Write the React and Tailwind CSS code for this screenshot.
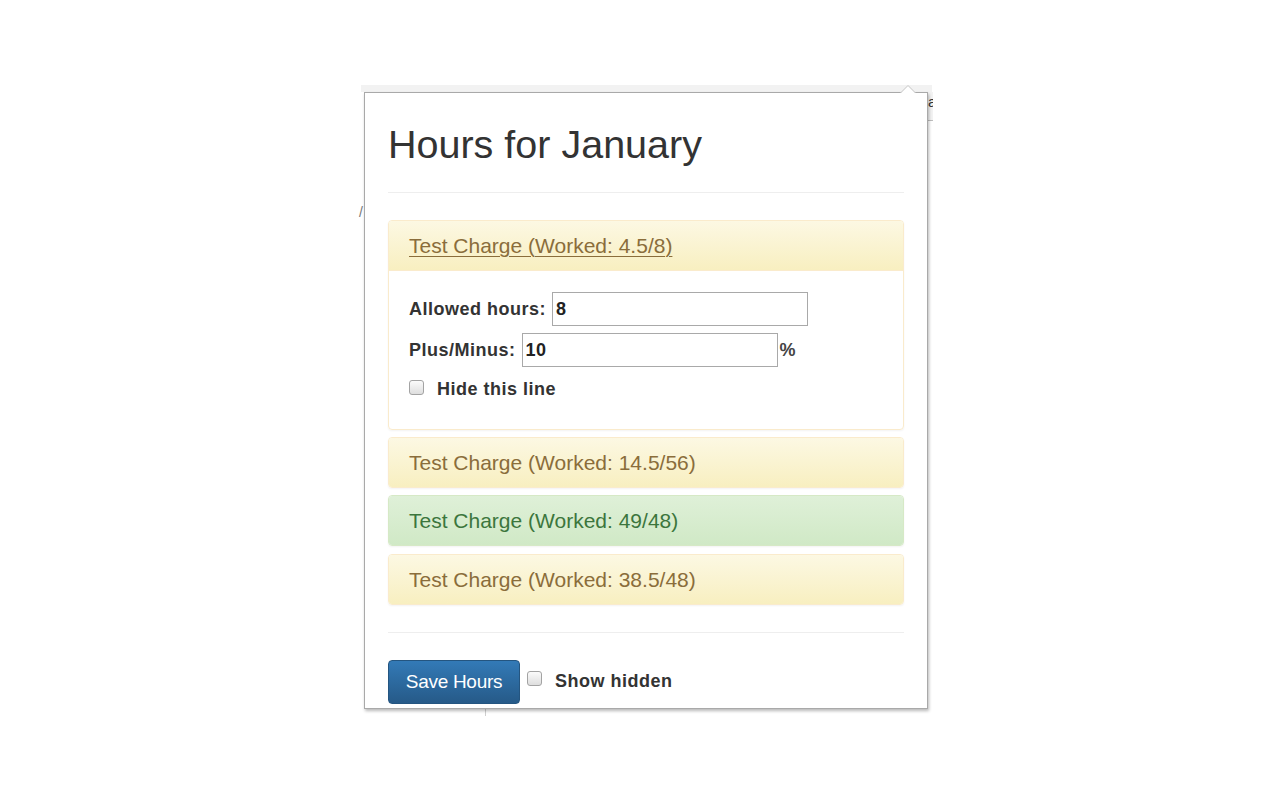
const font = { fontFamily: '"Liberation Sans", Arial, sans-serif' };

function Check({ className = "" }) {
  return (
    <span
      className={
        "block h-[15px] w-[15px] shrink-0 rounded-[3px] border border-[#a3a3a3] bg-gradient-to-b from-[#fbfbfb] to-[#dedede] " +
        className
      }
    />
  );
}

function Panel({ title, tone = "warning", children, link = false, className = "" }) {
  const warning = tone === "warning";
  return (
    <div
      className={
        "overflow-hidden rounded-[4px] border shadow-[0_1px_2px_rgba(0,0,0,0.05)] " +
        (warning ? "border-[#faebcc] " : "border-[#d6e9c6] ") +
        className
      }
    >
      <div
        className={
          "flex items-center bg-gradient-to-b pl-[20px] text-[21px] leading-none " +
          (children ? "h-[50px] border-b border-[#faebcc] " : "h-[49px] ") +
          (warning
            ? "from-[#fcf8e3] to-[#f8efc0] text-[#8a6d3b]"
            : "from-[#dff0d8] to-[#d0e9c6] text-[#3c763d]")
        }
      >
        <span className={link ? "underline decoration-1 underline-offset-[3px]" : ""}>{title}</span>
      </div>
      {children}
    </div>
  );
}

export default function App() {
  return (
    <div className="relative h-[800px] w-[1280px] overflow-hidden bg-white" style={font}>
      {/* page behind the popup */}
      <div className="absolute left-[361px] top-[85px] h-[7px] w-[571px] bg-[#f2f2f2]" />
      <div className="absolute left-[927px] top-[92px] h-[29px] w-[6px] overflow-hidden border-b border-[#bdbdbd] bg-[#f2f2f2]">
        <span className="absolute left-[1px] top-[2px] text-[15px] leading-none text-[#333]">a</span>
      </div>
      <span className="absolute left-[359px] top-[205px] text-[14px] leading-none text-[#777]">/</span>
      <div className="absolute left-[485px] top-[708px] h-[8px] w-px bg-[#cfcfcf]" />

      {/* popup */}
      <div className="absolute left-[364px] top-[92px] h-[617px] w-[564px] border border-[#a9a9a9] bg-white shadow-[1px_2px_3px_rgba(0,0,0,0.28)]">
        <svg className="absolute left-[535px] top-[-8px]" width="16" height="9" viewBox="0 0 16 9">
          <path d="M0 8.5 L8 0.5 L16 8.5" fill="white" stroke="#c4c4c4" strokeWidth="1" />
          <rect x="0" y="8" width="16" height="1" fill="white" />
        </svg>
        <div className="h-full overflow-hidden px-[23px]">
          <h1 className="mt-[29px] text-[39.5px] font-normal leading-[44px] text-[#333]">Hours for January</h1>
          <div className="mt-[26px] h-px bg-[#eeeeee]" />

          <div className="mt-[27px] flex flex-col">
            <Panel title="Test Charge (Worked: 4.5/8)" link>
              <div className="flex flex-col px-[20px] pb-[29px] pt-[21px] text-[18px] font-bold tracking-[0.5px] text-[#333]">
                <div className="flex h-[34px] items-center">
                  <span>Allowed hours:</span>
                  <span className="ml-[6px] flex h-[34px] w-[256px] items-center border border-[#a9a9a9] pl-[3px] text-[#222]">8</span>
                </div>
                <div className="mt-[7px] flex h-[34px] items-center">
                  <span>Plus/Minus:</span>
                  <span className="ml-[6px] flex h-[34px] w-[256px] items-center border border-[#a9a9a9] pl-[3px] text-[#222]">10</span>
                  <span className="ml-[2px] text-[#444]">%</span>
                </div>
                <div className="mt-[11px] flex h-[22px] items-center">
                  <Check className="-mt-[3px]" />
                  <span className="ml-[13px]">Hide this line</span>
                </div>
              </div>
            </Panel>
            <Panel title="Test Charge (Worked: 14.5/56)" className="mt-[7px]" />
            <Panel title="Test Charge (Worked: 49/48)" tone="success" className="mt-[7px]" />
            <Panel title="Test Charge (Worked: 38.5/48)" className="mt-[8px]" />
          </div>

          <div className="mt-[27px] h-px bg-[#eeeeee]" />

          <div className="mt-[27px] flex items-start">
            <button className="flex h-[44px] w-[132px] items-center justify-center rounded-[4px] border border-[#245580] bg-gradient-to-b from-[#337ab7] to-[#265a88] text-[19px] tracking-[-0.3px] text-white">
              Save Hours
            </button>
            <Check className="ml-[7px] mt-[11px]" />
            <span className="ml-[13px] mt-[10px] text-[18px] font-bold leading-[22px] tracking-[0.5px] text-[#333]">
              Show hidden
            </span>
          </div>
        </div>
      </div>
    </div>
  );
}
